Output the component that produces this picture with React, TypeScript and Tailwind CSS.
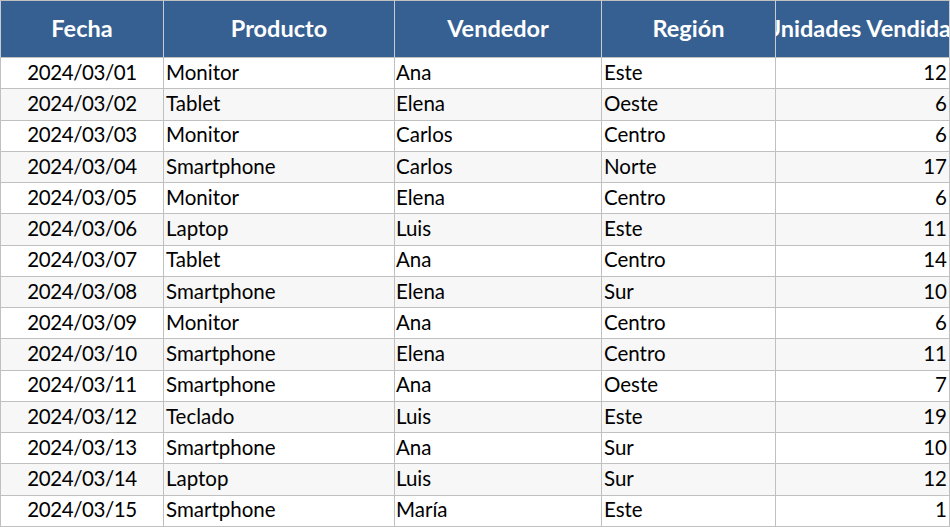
import React from "react";

const rows: [string, string, string, string, number][] = [
  ["2024/03/01", "Monitor", "Ana", "Este", 12],
  ["2024/03/02", "Tablet", "Elena", "Oeste", 6],
  ["2024/03/03", "Monitor", "Carlos", "Centro", 6],
  ["2024/03/04", "Smartphone", "Carlos", "Norte", 17],
  ["2024/03/05", "Monitor", "Elena", "Centro", 6],
  ["2024/03/06", "Laptop", "Luis", "Este", 11],
  ["2024/03/07", "Tablet", "Ana", "Centro", 14],
  ["2024/03/08", "Smartphone", "Elena", "Sur", 10],
  ["2024/03/09", "Monitor", "Ana", "Centro", 6],
  ["2024/03/10", "Smartphone", "Elena", "Centro", 11],
  ["2024/03/11", "Smartphone", "Ana", "Oeste", 7],
  ["2024/03/12", "Teclado", "Luis", "Este", 19],
  ["2024/03/13", "Smartphone", "Ana", "Sur", 10],
  ["2024/03/14", "Laptop", "Luis", "Sur", 12],
  ["2024/03/15", "Smartphone", "María", "Este", 1],
];

const headers = ["Fecha", "Producto", "Vendedor", "Región", "Unidades Vendidas"];

const cell = "border border-[#c0c0c0] py-0 pb-[2px] leading-none whitespace-nowrap overflow-hidden";

export default function App() {
  return (
    <div className="w-[950px] h-[527px] overflow-hidden bg-white" style={{ fontFamily: "Lato, 'Open Sans', sans-serif" }}>
      <table className="table-fixed border-collapse w-[949px] text-[20.5px] text-black">
        <colgroup>
          <col className="w-[163px]" />
          <col className="w-[231px]" />
          <col className="w-[207px]" />
          <col className="w-[174px]" />
          <col className="w-[174px]" />
        </colgroup>
        <thead>
          <tr className="h-[57px]">
            {headers.map((h) => (
              <th
                key={h}
                className="bg-[#366092] text-white font-bold text-[23.5px] text-center border border-[#c8ccd2] border-t-[#c0c0c0] border-b-[#c0c0c0] p-0 overflow-hidden whitespace-nowrap"
              >
                <div className="flex justify-center overflow-hidden">
                  <span className="whitespace-nowrap">{h}</span>
                </div>
              </th>
            ))}
          </tr>
        </thead>
        <tbody>
          {rows.map((r, i) => (
            <tr key={i} className={`h-[31.25px] ${i % 2 === 1 ? "bg-[#f7f7f7]" : "bg-white"}`}>
              <td className={`${cell} text-center px-[2px] tracking-[-0.4px]`}>{r[0]}</td>
              <td className={`${cell} text-left px-[2px]`}>{r[1]}</td>
              <td className={`${cell} text-left px-[1px]`}>{r[2]}</td>
              <td className={`${cell} text-left px-[2px]`}>{r[3]}</td>
              <td className={`${cell} text-right px-[2px]`}>{r[4]}</td>
            </tr>
          ))}
        </tbody>
      </table>
    </div>
  );
}
